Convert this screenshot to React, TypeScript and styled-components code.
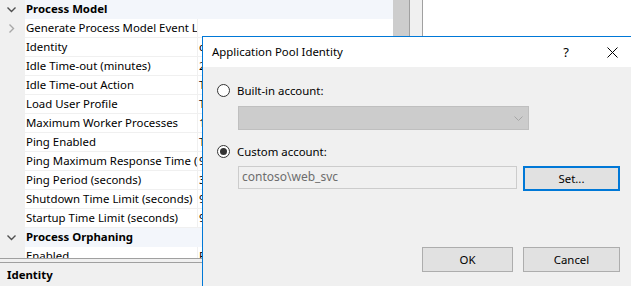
import React from 'react'
import styled, { createGlobalStyle } from 'styled-components'

const GlobalStyle = createGlobalStyle`
    html, body {
        margin: 0;
        padding: 0;
        overflow: hidden;
    }
    body {
        font-family: 'Noto Sans', 'Liberation Sans', sans-serif;
        font-size: 11.4px;
        color: #000;
    }
`

const Screen = styled.div`
    position: relative;
    width: 631px;
    height: 286px;
    overflow: hidden;
    display: flex;
    background: #fff;
`

const LeftPane = styled.div`
    width: 409px;
    display: flex;
    flex-direction: column;
    border-right: 1px solid #a0a0a0;
`

const GridArea = styled.div`
    height: 263px;
    display: flex;
    overflow: hidden;
`

const List = styled.div`
    flex: 1;
    background: #fff;
`

const Row = styled.div<{ $category?: boolean }>`
    display: flex;
    height: 19px;
    line-height: 18px;
    background: ${p => (p.$category ? '#f3f6fb' : '#fff')};
    font-weight: ${p => (p.$category ? 700 : 400)};
`

const Gutter = styled.div`
    width: 25px;
    flex: none;
    background: #f0f0f0;
    display: flex;
    align-items: center;
    justify-content: center;
    padding-right: 2px;
    box-sizing: border-box;
`

const Name = styled.div`
    width: 171px;
    flex: none;
    padding-left: 1px;
    white-space: nowrap;
    overflow: hidden;
    border-bottom: 1px solid #f0f0f0;
    border-right: 1px solid #f0f0f0;
`

const CategoryName = styled.div`
    flex: 1;
    padding-left: 1px;
    white-space: nowrap;
`

const Value = styled.div`
    flex: 1;
    padding-left: 1px;
    white-space: nowrap;
    overflow: hidden;
    border-bottom: 1px solid #f0f0f0;
`

const Scrollbar = styled.div`
    width: 16px;
    flex: none;
    background: #f0f0f0;
    display: flex;
    justify-content: center;
`

const Thumb = styled.div`
    width: 16px;
    height: 140px;
    background: #cdcdcd;
`

const Splitter = styled.div`
    height: 3px;
    flex: none;
    background: #f0f0f0;
    border-top: 1px solid #a0a0a0;
    border-bottom: 1px solid #a0a0a0;
`

const Description = styled.div`
    flex: 1;
    background: #f0f0f0;
    padding: 4px 7px;
    font-weight: 700;
`

const SideGap = styled.div`
    width: 12px;
    flex: none;
    background: #f0f0f0;
    border-right: 1px solid #a0a0a0;
`

const RightPane = styled.div`
    flex: 1;
    background: #fff;
`

const Dialog = styled.div`
    position: absolute;
    left: 202px;
    top: 36px;
    width: 432px;
    height: 260px;
    border: 1px solid #0078d7;
    background: #f0f0f0;
    display: flex;
    flex-direction: column;
`

const TitleBar = styled.div`
    height: 30px;
    background: #fff;
    display: flex;
    align-items: center;
    padding-left: 9px;
`

const Title = styled.div`
    flex: 1;
    padding-bottom: 1px;
`

const TitleButton = styled.div<{ $width: number }>`
    width: ${p => p.$width}px;
    display: flex;
    justify-content: center;
    font-size: 13px;
`

const Body = styled.div`
    padding: 17px 15px 0 14px;
    display: flex;
    flex-direction: column;
`

const RadioRow = styled.label<{ $top?: number }>`
    display: flex;
    align-items: center;
    gap: 7px;
    height: 13px;
    margin-top: ${p => p.$top ?? 0}px;
`

const RadioCircle = styled.span<{ $checked?: boolean }>`
    width: 13px;
    height: 13px;
    box-sizing: border-box;
    border: 1px solid #333;
    border-radius: 50%;
    background: #fff;
    display: flex;
    align-items: center;
    justify-content: center;

    &::after {
        content: '';
        width: 7px;
        height: 7px;
        border-radius: 50%;
        background: ${p => (p.$checked ? '#333' : 'transparent')};
    }
`

const Indented = styled.div<{ $top: number }>`
    margin-left: 21px;
    margin-top: ${p => p.$top}px;
    display: flex;
    gap: 6px;
`

const Combo = styled.div`
    width: 291px;
    height: 24px;
    box-sizing: border-box;
    background: #cccccc;
    border: 1px solid #bfbfbf;
    display: flex;
    align-items: center;
    justify-content: flex-end;
    padding-right: 5px;
`

const TextBox = styled.div`
    flex: 1;
    height: 23px;
    box-sizing: border-box;
    background: #f0f0f0;
    border: 1px solid #cccccc;
    color: #6d6d6d;
    padding-left: 3px;
    line-height: 20px;
    font-size: 12px;
`

const Button = styled.div<{ $width: number; $focused?: boolean }>`
    width: ${p => p.$width}px;
    height: 25px;
    box-sizing: border-box;
    background: #e1e1e1;
    border: ${p => (p.$focused ? '2px solid #0078d7' : '1px solid #adadad')};
    display: flex;
    align-items: center;
    justify-content: center;
    padding-bottom: 1px;
`

const Footer = styled.div`
    margin-top: 56px;
    display: flex;
    justify-content: flex-end;
    gap: 10px;
`

const ChevronDown = () => (
    <svg width="9" height="6" viewBox="0 0 9 6">
        <path d="M0.5 0.5 L4.5 4.5 L8.5 0.5" fill="none" stroke="#505050" strokeWidth="1.4" />
    </svg>
)

const ChevronRight = () => (
    <svg width="6" height="9" viewBox="0 0 6 9">
        <path d="M0.5 0.5 L4.5 4.5 L0.5 8.5" fill="none" stroke="#a8a8a8" strokeWidth="1.4" />
    </svg>
)

const ComboArrow = () => (
    <svg width="9" height="5" viewBox="0 0 9 5">
        <path d="M0.5 0.5 L4.5 4.5 L8.5 0.5" fill="none" stroke="#a6a6a6" strokeWidth="1" />
    </svg>
)

const CloseIcon = () => (
    <svg width="11" height="11" viewBox="0 0 11 11">
        <path d="M0.5 0.5 L10.5 10.5 M10.5 0.5 L0.5 10.5" stroke="#000" strokeWidth="1" />
    </svg>
)

type Item =
    | { kind: 'category'; name: string }
    | { kind: 'prop'; name: string; value: string; expandable?: boolean }

const items: Item[] = [
    { kind: 'category', name: 'Process Model' },
    { kind: 'prop', name: 'Generate Process Model Event Log Entry', value: '', expandable: true },
    { kind: 'prop', name: 'Identity', value: 'contoso\\web_svc' },
    { kind: 'prop', name: 'Idle Time-out (minutes)', value: '20' },
    { kind: 'prop', name: 'Idle Time-out Action', value: 'Terminate' },
    { kind: 'prop', name: 'Load User Profile', value: 'True' },
    { kind: 'prop', name: 'Maximum Worker Processes', value: '1' },
    { kind: 'prop', name: 'Ping Enabled', value: 'True' },
    { kind: 'prop', name: 'Ping Maximum Response Time (seconds)', value: '90' },
    { kind: 'prop', name: 'Ping Period (seconds)', value: '30' },
    { kind: 'prop', name: 'Shutdown Time Limit (seconds)', value: '90' },
    { kind: 'prop', name: 'Startup Time Limit (seconds)', value: '90' },
    { kind: 'category', name: 'Process Orphaning' },
    { kind: 'prop', name: 'Enabled', value: 'False' },
]

const App = () => (
    <>
        <GlobalStyle />
        <Screen>
            <LeftPane>
                <GridArea>
                    <List>
                        {items.map(item =>
                            item.kind === 'category' ? (
                                <Row $category key={item.name}>
                                    <Gutter>
                                        <ChevronDown />
                                    </Gutter>
                                    <CategoryName>{item.name}</CategoryName>
                                </Row>
                            ) : (
                                <Row key={item.name}>
                                    <Gutter>{item.expandable && <ChevronRight />}</Gutter>
                                    <Name>{item.name}</Name>
                                    <Value>{item.value}</Value>
                                </Row>
                            )
                        )}
                    </List>
                    <Scrollbar>
                        <Thumb />
                    </Scrollbar>
                </GridArea>
                <Splitter />
                <Description>Identity</Description>
            </LeftPane>
            <SideGap />
            <RightPane />

            <Dialog>
                <TitleBar>
                    <Title>Application Pool Identity</Title>
                    <TitleButton $width={46}>?</TitleButton>
                    <TitleButton $width={46}>
                        <CloseIcon />
                    </TitleButton>
                </TitleBar>
                <Body>
                    <RadioRow>
                        <RadioCircle />
                        Built-in account:
                    </RadioRow>
                    <Indented $top={9}>
                        <Combo>
                            <ComboArrow />
                        </Combo>
                    </Indented>
                    <RadioRow $top={15}>
                        <RadioCircle $checked />
                        Custom account:
                    </RadioRow>
                    <Indented $top={8}>
                        <TextBox>contoso\web_svc</TextBox>
                        <Button $width={97} $focused>
                            Set...
                        </Button>
                    </Indented>
                    <Footer>
                        <Button $width={91}>OK</Button>
                        <Button $width={97}>Cancel</Button>
                    </Footer>
                </Body>
            </Dialog>
        </Screen>
    </>
)

export default App
